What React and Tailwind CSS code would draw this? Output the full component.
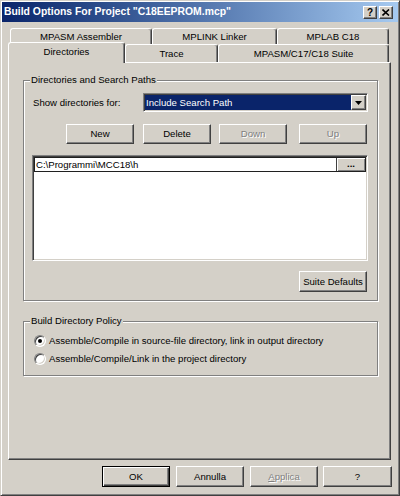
import React from 'react';

const cn = (...c) => c.filter(Boolean).join(' ');

// classic raised 3D edge used by buttons and tabs
const raised = "bg-[#d4d0c8] border border-t-white border-l-white border-r-[#404040] border-b-[#404040] shadow-[inset_-1px_-1px_0_#808080]";
const sunken = "border border-t-[#808080] border-l-[#808080] border-r-white border-b-white shadow-[inset_1px_1px_0_#404040,inset_-1px_-1px_0_#d4d0c8]";
const disabledText = "text-[#808080] [text-shadow:1px_1px_0_#fff]";

const Btn = ({ children, disabled, isDefault, className }) => (
    <button
        className={cn(
            "flex items-center justify-center bg-[#d4d0c8]",
            isDefault
                ? "border border-black shadow-[inset_1px_1px_0_#fff,inset_-1px_-1px_0_#404040,inset_-2px_-2px_0_#808080]"
                : raised,
            disabled && disabledText,
            className
        )}
    >
        {children}
    </button>
);

const Tab = ({ children, className }) => (
    <div
        className={cn(
            "flex items-center justify-center bg-[#d4d0c8] border-t border-l border-r border-t-white border-l-white border-r-[#404040] rounded-tl-[3px] rounded-tr-[3px] shadow-[inset_-1px_0_0_#808080]",
            className
        )}
    >
        {children}
    </div>
);

const GroupBox = ({ label, className, children }) => (
    <div className={cn("relative border border-[#808080] shadow-[inset_1px_1px_0_#fff,1px_1px_0_#fff]", className)}>
        <span className="absolute left-[6px] -top-[7px] px-[1px] leading-[12px] bg-[#d4d0c8]">{label}</span>
        {children}
    </div>
);

const Radio = ({ checked, children }) => (
    <div className="flex items-center gap-[3px] h-[12px]">
        <span className="w-[12px] h-[12px] rounded-full bg-white flex items-center justify-center border border-t-[#808080] border-l-[#808080] border-r-white border-b-white shadow-[inset_1px_1px_0_#404040,inset_-1px_-1px_0_#d4d0c8]">
            {checked && <span className="w-[4px] h-[4px] rounded-full bg-black" />}
        </span>
        <span>{children}</span>
    </div>
);

const TitleBar = () => (
    <div className="h-[20px] flex items-center justify-between pl-[2px] pr-[5px] bg-linear-to-r from-[#0a246a] to-[#a6caf0]">
        <span className="text-white font-bold text-[10.4px]">Build Options For Project "C18EEPROM.mcp"</span>
        <div className="flex gap-[2px]">
            <div className={cn(raised, "w-[14px] h-[13px] flex items-center justify-center font-bold text-[10px] pt-px")}>?</div>
            <div className={cn(raised, "w-[14px] h-[13px] flex items-center justify-center")}>
                <svg width="8" height="7" viewBox="0 0 8 7">
                    <path d="M0.5 0.5 L7 6.5 M7 0.5 L0.5 6.5" stroke="#000" strokeWidth="1.6" />
                </svg>
            </div>
        </div>
    </div>
);

export default function App() {
    return (
        <div className="w-[400px] h-[496px] bg-[#d4d0c8] text-black text-[9.6px] leading-none font-['Liberation_Sans',Arial,sans-serif]">
            <div className="w-full h-full flex flex-col p-px border border-t-[#d4d0c8] border-l-[#d4d0c8] border-r-[#404040] border-b-[#404040] shadow-[inset_1px_1px_0_#fff,inset_-1px_-1px_0_#808080]">
                <TitleBar />

                {/* Tabs, back row */}
                <div className="flex h-[16px] mt-[6px] ml-[8px]">
                    <Tab className="w-[142px] h-full">MPASM Assembler</Tab>
                    <Tab className="w-[125px] h-full">MPLINK Linker</Tab>
                    <Tab className="w-[112px] h-full">MPLAB C18</Tab>
                </div>

                {/* Tabs, front row */}
                <div className="flex items-end h-[18px] ml-[6px]">
                    <Tab className="relative z-10 w-[117px] h-[21px] -mb-px pb-[2px]">Directories</Tab>
                    <Tab className="w-[93px] h-full pt-px">Trace</Tab>
                    <Tab className="w-[171px] h-full pt-px">MPASM/C17/C18 Suite</Tab>
                </div>

                {/* Tab panel */}
                <div className={cn(raised, "w-[383px] h-[398px] ml-[6px] flex flex-col")}>
                    <GroupBox label="Directories and Search Paths" className="ml-[14px] mt-[17px] w-[355px] h-[221px] flex flex-col pt-[12px] pl-[9px] pr-[9px]">
                        <div className="flex items-center h-[19px]">
                            <span className="w-[110px]">Show directories for:</span>
                            <div className={cn(sunken, "flex-1 h-full flex p-px bg-white")}>
                                <div className="flex-1 bg-[#0a246a] text-white flex items-center pl-px">Include Search Path</div>
                                <div className={cn(raised, "w-[15px] h-full flex items-center justify-center")}>
                                    <svg width="7" height="4" viewBox="0 0 7 4">
                                        <path d="M0 0 H7 L3.5 4 Z" fill="#000" />
                                    </svg>
                                </div>
                            </div>
                        </div>

                        <div className="flex h-[20px] mt-[12px]">
                            <Btn className="w-[68px] h-full ml-[33px]">New</Btn>
                            <Btn className="w-[68px] h-full ml-[9px]">Delete</Btn>
                            <Btn disabled className="w-[68px] h-full ml-[8px]">Down</Btn>
                            <Btn disabled className="w-[68px] h-full ml-[12px]">Up</Btn>
                        </div>

                        <div className={cn(sunken, "mt-[11px] -ml-px w-[336px] h-[106px] bg-white p-px flex flex-col")}>
                            <div className="flex h-[15px] border border-[#202020]">
                                <span className="flex-1 flex items-center pl-[1px]">{"C:\\Programmi\\MCC18\\h"}</span>
                                <div className="w-[29px] h-full bg-[#d4d0c8] border-l border-[#404040] shadow-[inset_1px_1px_0_#fff,inset_-1px_-1px_0_#808080] flex items-end justify-center pb-[2px] font-bold">...</div>
                            </div>
                        </div>

                        <div className="flex justify-end mt-[10px] pr-[1px]">
                            <Btn className="w-[68px] h-[21px]">Suite Defaults</Btn>
                        </div>
                    </GroupBox>

                    <GroupBox label="Build Directory Policy" className="ml-[14px] mt-[20px] w-[355px] h-[55px] flex flex-col pt-[13px] pl-[10px] gap-[6px]">
                        <Radio checked>Assemble/Compile in source-file directory, link in output directory</Radio>
                        <Radio>Assemble/Compile/Link in the project directory</Radio>
                    </GroupBox>
                </div>

                {/* Dialog buttons */}
                <div className="flex justify-end mt-[6px] pr-[6px] h-[21px]">
                    <Btn isDefault className="w-[68px] h-full">OK</Btn>
                    <Btn className="w-[68px] h-full ml-[6px]">Annulla</Btn>
                    <Btn disabled className="w-[68px] h-full ml-[6px]"><span><span className="underline">A</span>pplica</span></Btn>
                    <Btn className="w-[69px] h-full ml-[5px]">?</Btn>
                </div>
            </div>
        </div>
    );
}
